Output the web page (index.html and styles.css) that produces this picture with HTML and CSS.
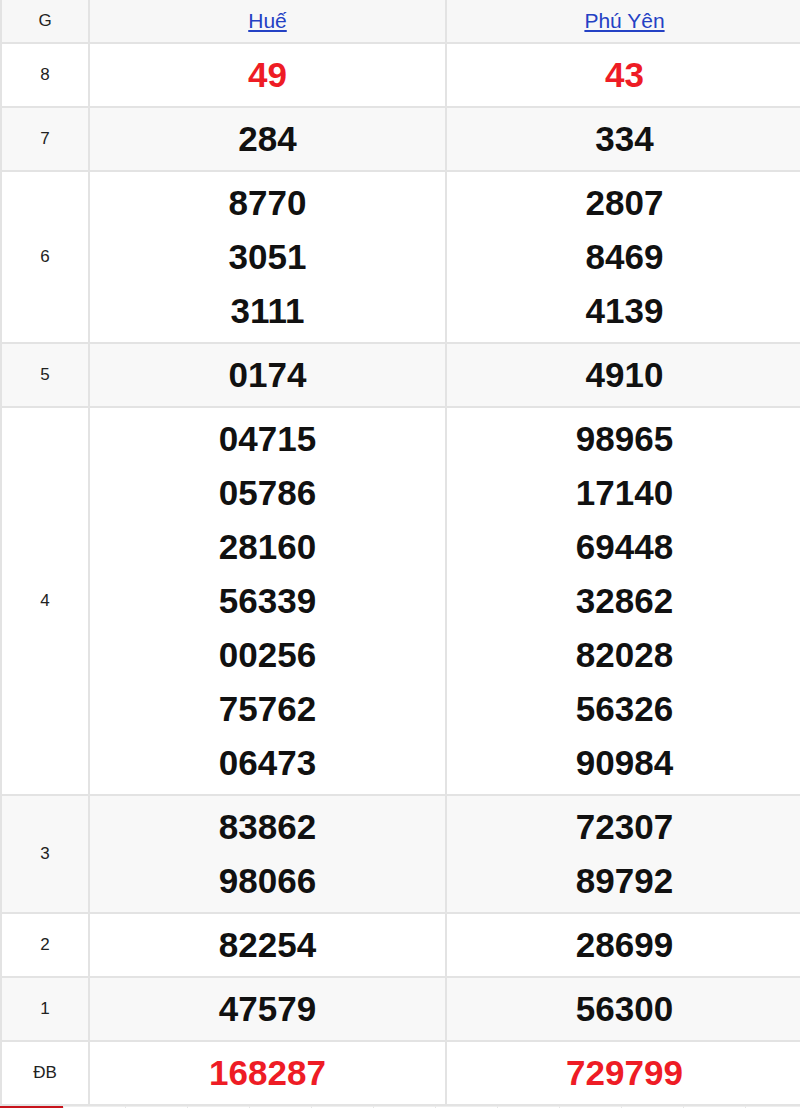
FILE: index.html
```html
<!DOCTYPE html>
<html lang="vi">
<head>
<meta charset="utf-8">
<title>Kết quả xổ số</title>
<link rel="stylesheet" href="styles.css">
</head>
<body>
<table class="results">
  <thead>
    <tr>
      <th class="label">G</th>
      <th class="prov"><a href="#">Huế</a></th>
      <th class="prov"><a href="#">Phú Yên</a></th>
    </tr>
  </thead>
  <tbody>
    <tr class="white">
      <td class="label">8</td>
      <td class="num red"><span>49</span></td>
      <td class="num red"><span>43</span></td>
    </tr>
    <tr class="gray">
      <td class="label">7</td>
      <td class="num"><span>284</span></td>
      <td class="num"><span>334</span></td>
    </tr>
    <tr class="white">
      <td class="label">6</td>
      <td class="num"><span>8770</span><span>3051</span><span>3111</span></td>
      <td class="num"><span>2807</span><span>8469</span><span>4139</span></td>
    </tr>
    <tr class="gray">
      <td class="label">5</td>
      <td class="num"><span>0174</span></td>
      <td class="num"><span>4910</span></td>
    </tr>
    <tr class="white">
      <td class="label">4</td>
      <td class="num"><span>04715</span><span>05786</span><span>28160</span><span>56339</span><span>00256</span><span>75762</span><span>06473</span></td>
      <td class="num"><span>98965</span><span>17140</span><span>69448</span><span>32862</span><span>82028</span><span>56326</span><span>90984</span></td>
    </tr>
    <tr class="gray">
      <td class="label">3</td>
      <td class="num"><span>83862</span><span>98066</span></td>
      <td class="num"><span>72307</span><span>89792</span></td>
    </tr>
    <tr class="white">
      <td class="label">2</td>
      <td class="num"><span>82254</span></td>
      <td class="num"><span>28699</span></td>
    </tr>
    <tr class="gray">
      <td class="label">1</td>
      <td class="num"><span>47579</span></td>
      <td class="num"><span>56300</span></td>
    </tr>
    <tr class="white">
      <td class="label">ĐB</td>
      <td class="num red"><span>168287</span></td>
      <td class="num red"><span>729799</span></td>
    </tr>
  </tbody>
</table>
<div class="tabs">
  <div class="tab active"></div>
  <div class="tab"></div>
  <div class="tab"></div>
  <div class="tab"></div>
  <div class="tab"></div>
  <div class="tab"></div>
  <div class="tab"></div>
  <div class="tab"></div>
  <div class="tab"></div>
  <div class="tab"></div>
  <div class="tab"></div>
  <div class="tab"></div>
  <div class="tab"></div>
</div>
</body>
</html>
```
FILE: styles.css
```css
html, body {
  margin: 0;
  padding: 0;
  background: #ffffff;
  overflow: hidden;
}

body {
  font-family: "Liberation Sans", Arial, sans-serif;
  color: #111;
}

.results {
  border-collapse: separate;
  border-spacing: 0;
  table-layout: fixed;
  width: 804px;
  border-left: 2px solid #e3e3e3;
}

.results th,
.results td {
  box-sizing: border-box;
  border-right: 2px solid #e3e3e3;
  border-bottom: 2px solid #e3e3e3;
  text-align: center;
  vertical-align: middle;
  padding: 0;
}

.results thead th {
  background: #f7f7f7;
  height: 44px;
  font-weight: normal;
}

.results thead th.label {
  width: 88px;
  font-size: 17px;
  color: #222;
}

.results thead th.prov {
  width: 357px;
}

.results thead th:last-child {
  width: 357px;
}

.prov a {
  color: #2441c4;
  font-size: 21px;
  text-decoration: underline;
  text-underline-offset: 2px;
}

.gray td {
  background: #f8f8f8;
}

.white td {
  background: #ffffff;
}

.label {
  font-size: 17px;
  color: #222;
}

.num {
  padding: 4px 0 !important;
  font-size: 35px;
  font-weight: bold;
  line-height: 54px;
  color: #111;
}

.num span {
  display: block;
}

.num.red {
  color: #ee1c25;
}

.tabs {
  display: flex;
  height: 20px;
}

.tab {
  flex: 0 0 62px;
  box-sizing: border-box;
  border-left: 1px solid #e6e6e6;
  border-top: 1px solid #eeeeee;
}

.tab.active {
  flex-basis: 63px;
  border-left: 0;
  border-top: 3px solid #c8141c;
}
```
